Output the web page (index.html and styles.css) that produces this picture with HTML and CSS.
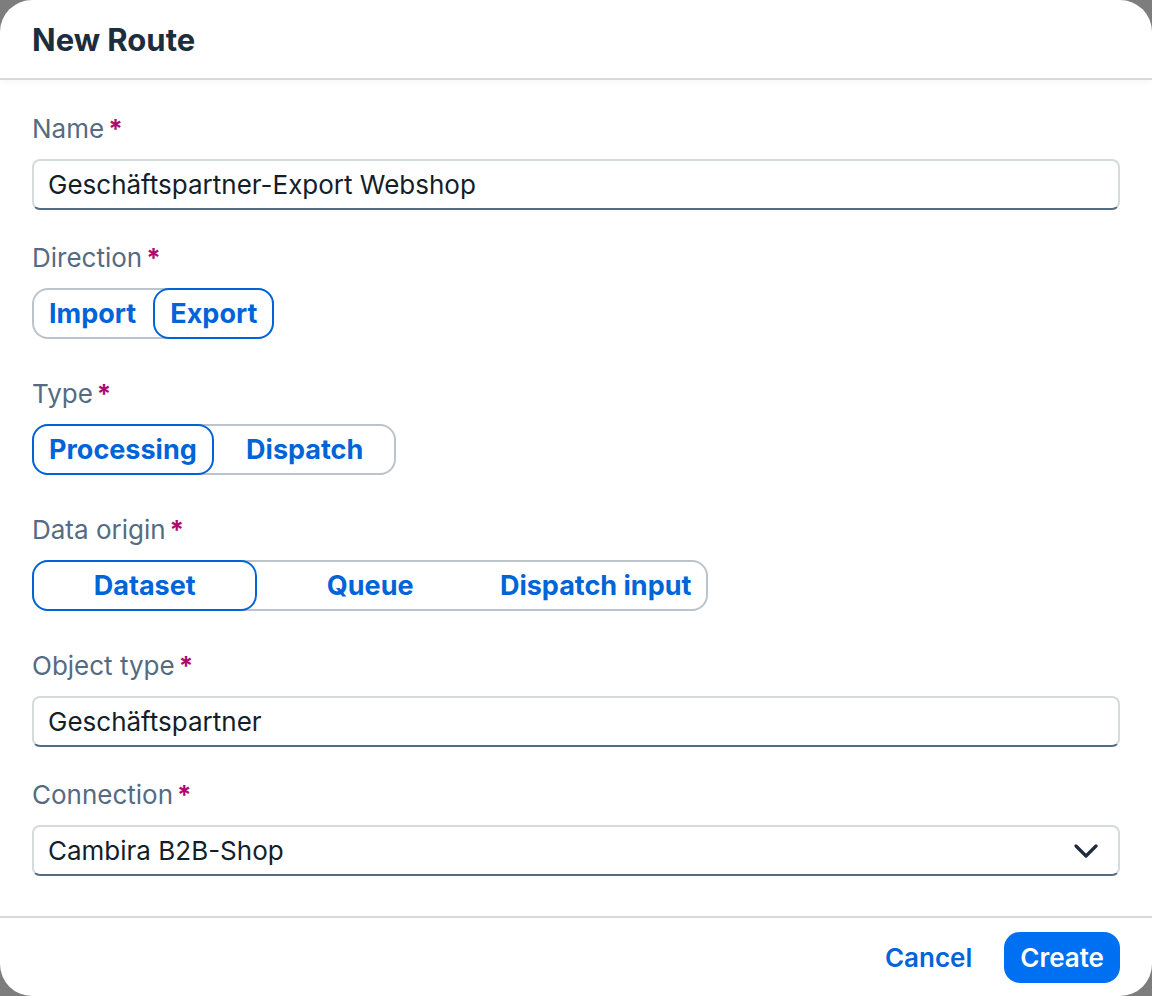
FILE: index.html
```html
<!DOCTYPE html>
<html lang="en">
<head>
    <meta charset="UTF-8">
    <meta name="viewport" content="width=device-width, initial-scale=1.0">
    <title>New Route</title>
    <link rel="stylesheet" href="styles.css">
</head>
<body>
    <div class="dialog">
        <header class="dialog-header">
            <h1>New Route</h1>
        </header>

        <div class="dialog-content">
            <div class="field">
                <label class="field-label required">Name</label>
                <div class="input">Geschäftspartner-Export Webshop</div>
            </div>

            <div class="field field-seg">
                <label class="field-label required">Direction</label>
                <div class="segmented">
                    <button class="seg-btn">Import</button>
                    <button class="seg-btn selected">Export</button>
                </div>
            </div>

            <div class="field field-seg">
                <label class="field-label required">Type</label>
                <div class="segmented">
                    <button class="seg-btn selected">Processing</button>
                    <button class="seg-btn">Dispatch</button>
                </div>
            </div>

            <div class="field field-seg">
                <label class="field-label required">Data origin</label>
                <div class="segmented">
                    <button class="seg-btn selected">Dataset</button>
                    <button class="seg-btn">Queue</button>
                    <button class="seg-btn">Dispatch input</button>
                </div>
            </div>

            <div class="field">
                <label class="field-label required">Object type</label>
                <div class="input">Geschäftspartner</div>
            </div>

            <div class="field">
                <label class="field-label required">Connection</label>
                <div class="input select">
                    <span>Cambira B2B-Shop</span>
                    <svg class="chevron" width="24" height="16" viewBox="0 0 24 16">
                        <path d="M2 3 L12 13 L22 3" fill="none" stroke="#1d2d3e" stroke-width="3.2" stroke-linecap="round" stroke-linejoin="round"/>
                    </svg>
                </div>
            </div>
        </div>

        <footer class="dialog-footer">
            <button class="btn btn-transparent">Cancel</button>
            <button class="btn btn-emphasized">Create</button>
        </footer>
    </div>
</body>
</html>
```

FILE: styles.css
```css
html, body {
    margin: 0;
    height: 100%;
}
body {
    background: #7d7d7d;
    font-family: Inter, "Noto Sans", sans-serif;
    overflow: hidden;
}
.dialog {
    width: 1152px;
    height: 996px;
    background: #fff;
    border-radius: 32px;
    display: flex;
    flex-direction: column;
    overflow: hidden;
}
.dialog-header {
    height: 78px;
    border-bottom: 2px solid #d9d9d9;
    box-shadow: 0 2px 6px rgba(0,0,0,0.04);
    display: flex;
    align-items: center;
    padding: 0 32px;
    flex-shrink: 0;
}
.dialog-header h1 {
    margin: 0;
    font-size: 31px;
    font-weight: 700;
    color: #1d2d3e;
}
.dialog-content {
    flex: 1;
    padding: 29px 32px 0;
}
.field {
    display: flex;
    flex-direction: column;
    margin-bottom: 28px;
}
.field-seg {
    margin-bottom: 35px;
}
.field-label {
    font-size: 26px;
    line-height: 40px;
    color: #556b82;
    margin-bottom: 10px;
}
.required::after {
    content: "*";
    color: #b00870;
    font-weight: 700;
    margin-left: 4px;
}
.input {
    height: 51px;
    box-sizing: border-box;
    border: 2px solid #d5dadd;
    border-bottom-color: #556b82;
    border-radius: 8px;
    padding: 0 14px;
    display: flex;
    align-items: center;
    font-size: 26px;
    color: #131e29;
}
.select {
    justify-content: space-between;
    padding-right: 20px;
}
.segmented {
    display: inline-grid;
    grid-auto-flow: column;
    grid-auto-columns: 1fr;
    align-self: flex-start;
    border-radius: 16px;
    box-shadow: inset 0 0 0 2px #bcc3ca;
}
.seg-btn {
    height: 51px;
    box-sizing: border-box;
    border: 2px solid transparent;
    border-radius: 16px;
    background: transparent;
    padding: 0 15px;
    font-family: inherit;
    font-size: 27px;
    font-weight: 700;
    color: #0064d9;
    white-space: nowrap;
}
.seg-btn.selected {
    border-color: #0064d9;
    background: #fff;
}
.dialog-footer {
    height: 78px;
    border-top: 2px solid #d9d9d9;
    display: flex;
    align-items: center;
    justify-content: flex-end;
    gap: 16px;
    padding: 0 32px;
    flex-shrink: 0;
}
.btn {
    height: 51px;
    border-radius: 16px;
    border: 2px solid transparent;
    padding: 0 14px;
    font-family: inherit;
    font-size: 26px;
    font-weight: 600;
}
.btn-transparent {
    background: transparent;
    color: #0064d9;
}
.btn-emphasized {
    background: #0070f2;
    border-color: #0070f2;
    color: #fff;
}
```
